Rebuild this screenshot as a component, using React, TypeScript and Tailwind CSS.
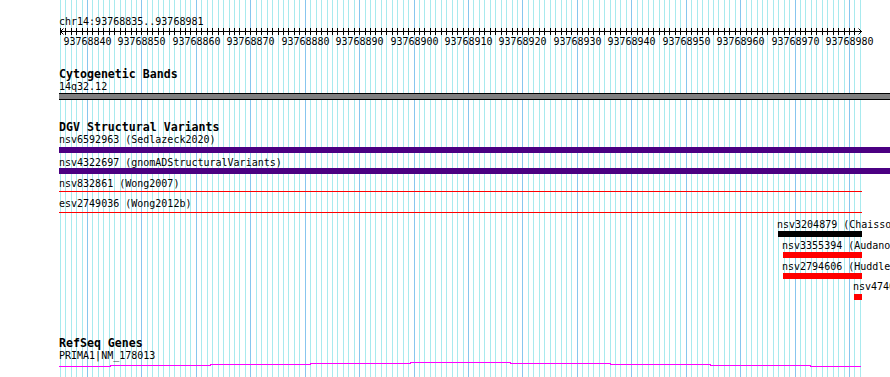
import React from 'react';

// one grid line per base pair, 93768835 .. 93768982
const START = 93768835;
const COUNT = 148;
const px = (i: number) => Math.round(59.8 + i * 5.443);

const Grid: React.FC = () => (
  <svg className="absolute inset-0" width={890} height={377} shapeRendering="crispEdges">
    {Array.from({ length: COUNT }, (_, i) => (
      <line
        key={i}
        x1={px(i) + 0.5}
        x2={px(i) + 0.5}
        y1={0}
        y2={377}
        stroke={(START + i) % 10 === 0 ? '#87c6ee' : '#a8eaee'}
        strokeWidth={1}
      />
    ))}
  </svg>
);

const Ruler: React.FC = () => {
  const ticks = Array.from({ length: COUNT - 1 }, (_, i) => i);
  const labels = ticks.filter((i) => (START + i) % 10 === 0);
  return (
    <svg className="block" width={890} height={20}>
      <g shapeRendering="crispEdges" stroke="#000" strokeWidth={1}>
        <line x1={60} x2={862} y1={4.5} y2={4.5} />
        {ticks.map((i) => (
          <line key={i} x1={px(i) + 0.5} x2={px(i) + 0.5} y1={1} y2={8} />
        ))}
      </g>
      <path d="M63.5 1.5 L60.5 4.5 L63.5 7.5 M858.5 1.5 L861.5 4.5 L858.5 7.5" stroke="#000" fill="none" />
      {labels.map((i) => (
        <text
          key={i}
          x={px(i) + 0.5}
          y={18}
          textAnchor="middle"
          fontSize={10}
          fontFamily="'DejaVu Sans Mono', monospace"
          fill="#000"
        >
          {START + i}
        </text>
      ))}
    </svg>
  );
};

const Title: React.FC<{ children: React.ReactNode; className?: string }> = ({ children, className }) => (
  <div className={`h-[13px] pl-[59px] text-[11.6px] leading-[13px] font-bold whitespace-nowrap ${className ?? ''}`}>
    {children}
  </div>
);

const Label: React.FC<{ children: React.ReactNode; className?: string }> = ({ children, className }) => (
  <div className={`h-[11px] leading-[11px] whitespace-nowrap ${className ?? 'pl-[59px]'}`}>{children}</div>
);

// RefSeq wiggle: [x0, x1, y] in page coords
const refseq: [number, number, number][] = [
  [59, 110, 366],
  [110, 210, 365],
  [210, 310, 364],
  [310, 410, 363],
  [410, 510, 362],
  [510, 610, 363],
  [610, 710, 364],
  [710, 810, 365],
  [810, 861, 366],
];

const App: React.FC = () => {
  const d = refseq
    .map(([a, b, y], i) => `${i === 0 ? 'M' : 'L'}${a} ${y - 361 + 0.5} L${b} ${y - 361 + 0.5}`)
    .join(' ');

  return (
    <div className="relative w-[890px] h-[377px] overflow-hidden bg-white text-black text-[10px] font-['DejaVu_Sans_Mono',monospace]">
      <Grid />
      <div className="relative flex flex-col">
        {/* ruler */}
        <Label className="pl-[59px] mt-[16px]">chr14:93768835..93768981</Label>
        <Ruler />

        {/* cytobands */}
        <Title className="mt-[21px]">Cytogenetic Bands</Title>
        <Label>14q32.12</Label>
        <div className="ml-[59px] mt-[1px] h-[7px] border-y border-black bg-[#808080]" />

        {/* DGV */}
        <Title className="mt-[21px]">DGV Structural Variants</Title>
        <Label>nsv6592963 (Sedlazeck2020)</Label>
        <div className="ml-[59px] mt-[2px] h-[6px] bg-[#4b0082]" />
        <Label className="pl-[59px] mt-[4px]">nsv4322697 (gnomADStructuralVariants)</Label>
        <div className="ml-[59px] h-[6px] bg-[#4b0082]" />
        <Label className="pl-[59px] mt-[4px]">nsv832861 (Wong2007)</Label>
        <div className="ml-[59px] mt-[2px] h-[1px] w-[803px] bg-[#ff0000]" />
        <Label className="pl-[59px] mt-[6px]">esv2749036 (Wong2012b)</Label>
        <div className="ml-[59px] mt-[3px] h-[1px] w-[803px] bg-[#ff0000]" />

        <Label className="pl-[777px] mt-[6px]">nsv3204879 (Chaisson2019)</Label>
        <div className="ml-[778px] mt-[1px] h-[6px] w-[84px] bg-black" />
        <Label className="pl-[782px] mt-[3px]">nsv3355394 (Audano2019)</Label>
        <div className="ml-[783px] mt-[1px] h-[6px] w-[79px] bg-[#ff0000]" />
        <Label className="pl-[782px] mt-[3px]">nsv2794606 (Huddleston2017)</Label>
        <div className="ml-[783px] mt-[1px] h-[6px] w-[79px] bg-[#ff0000]" />
        <Label className="pl-[853px] mt-[2px]">nsv4740</Label>
        <div className="ml-[854px] mt-[2px] h-[6px] w-[8px] bg-[#ff0000]" />

        {/* RefSeq */}
        <Title className="mt-[37px]">RefSeq Genes</Title>
        <Label>PRIMA1|NM_178013</Label>
        <svg className="block" width={890} height={8} shapeRendering="crispEdges">
          <path d={d} stroke="#ff00ff" strokeWidth={1} fill="none" />
        </svg>
      </div>
    </div>
  );
};

export default App;
